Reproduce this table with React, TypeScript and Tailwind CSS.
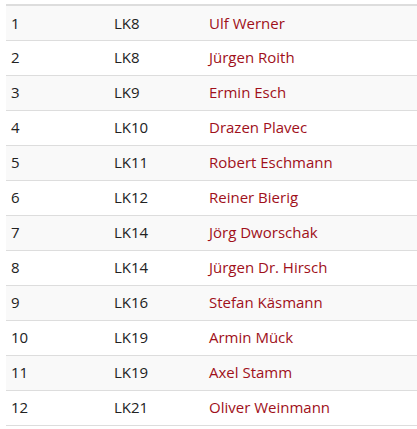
const rows = [
  ["1", "LK8", "Ulf Werner"],
  ["2", "LK8", "Jürgen Roith"],
  ["3", "LK9", "Ermin Esch"],
  ["4", "LK10", "Drazen Plavec"],
  ["5", "LK11", "Robert Eschmann"],
  ["6", "LK12", "Reiner Bierig"],
  ["7", "LK14", "Jörg Dworschak"],
  ["8", "LK14", "Jürgen Dr. Hirsch"],
  ["9", "LK16", "Stefan Käsmann"],
  ["10", "LK19", "Armin Mück"],
  ["11", "LK19", "Axel Stamm"],
  ["12", "LK21", "Oliver Weinmann"],
];

export default function App() {
  return (
    <div className="w-[417px] h-[429px] bg-white pt-1 pl-[6px] font-['Open_Sans',sans-serif] text-[15px] text-[#222]">
      <table className="w-full border-collapse border-t-2 border-[#ddd]">
        <tbody>
          {rows.map(([pos, lk, name], i) => (
            <tr
              key={i}
              className={`h-[35px] border-b border-[#ddd] ${i % 2 === 0 ? "bg-[#f9f9f9]" : "bg-white"}`}
            >
              <td className="w-[103px] pl-[5px] align-middle">{pos}</td>
              <td className="w-[95px] pl-[5px] align-middle">{lk}</td>
              <td className="pl-[5px] align-middle">
                <a className="text-[#a0101a]">{name}</a>
              </td>
            </tr>
          ))}
        </tbody>
      </table>
    </div>
  );
}
